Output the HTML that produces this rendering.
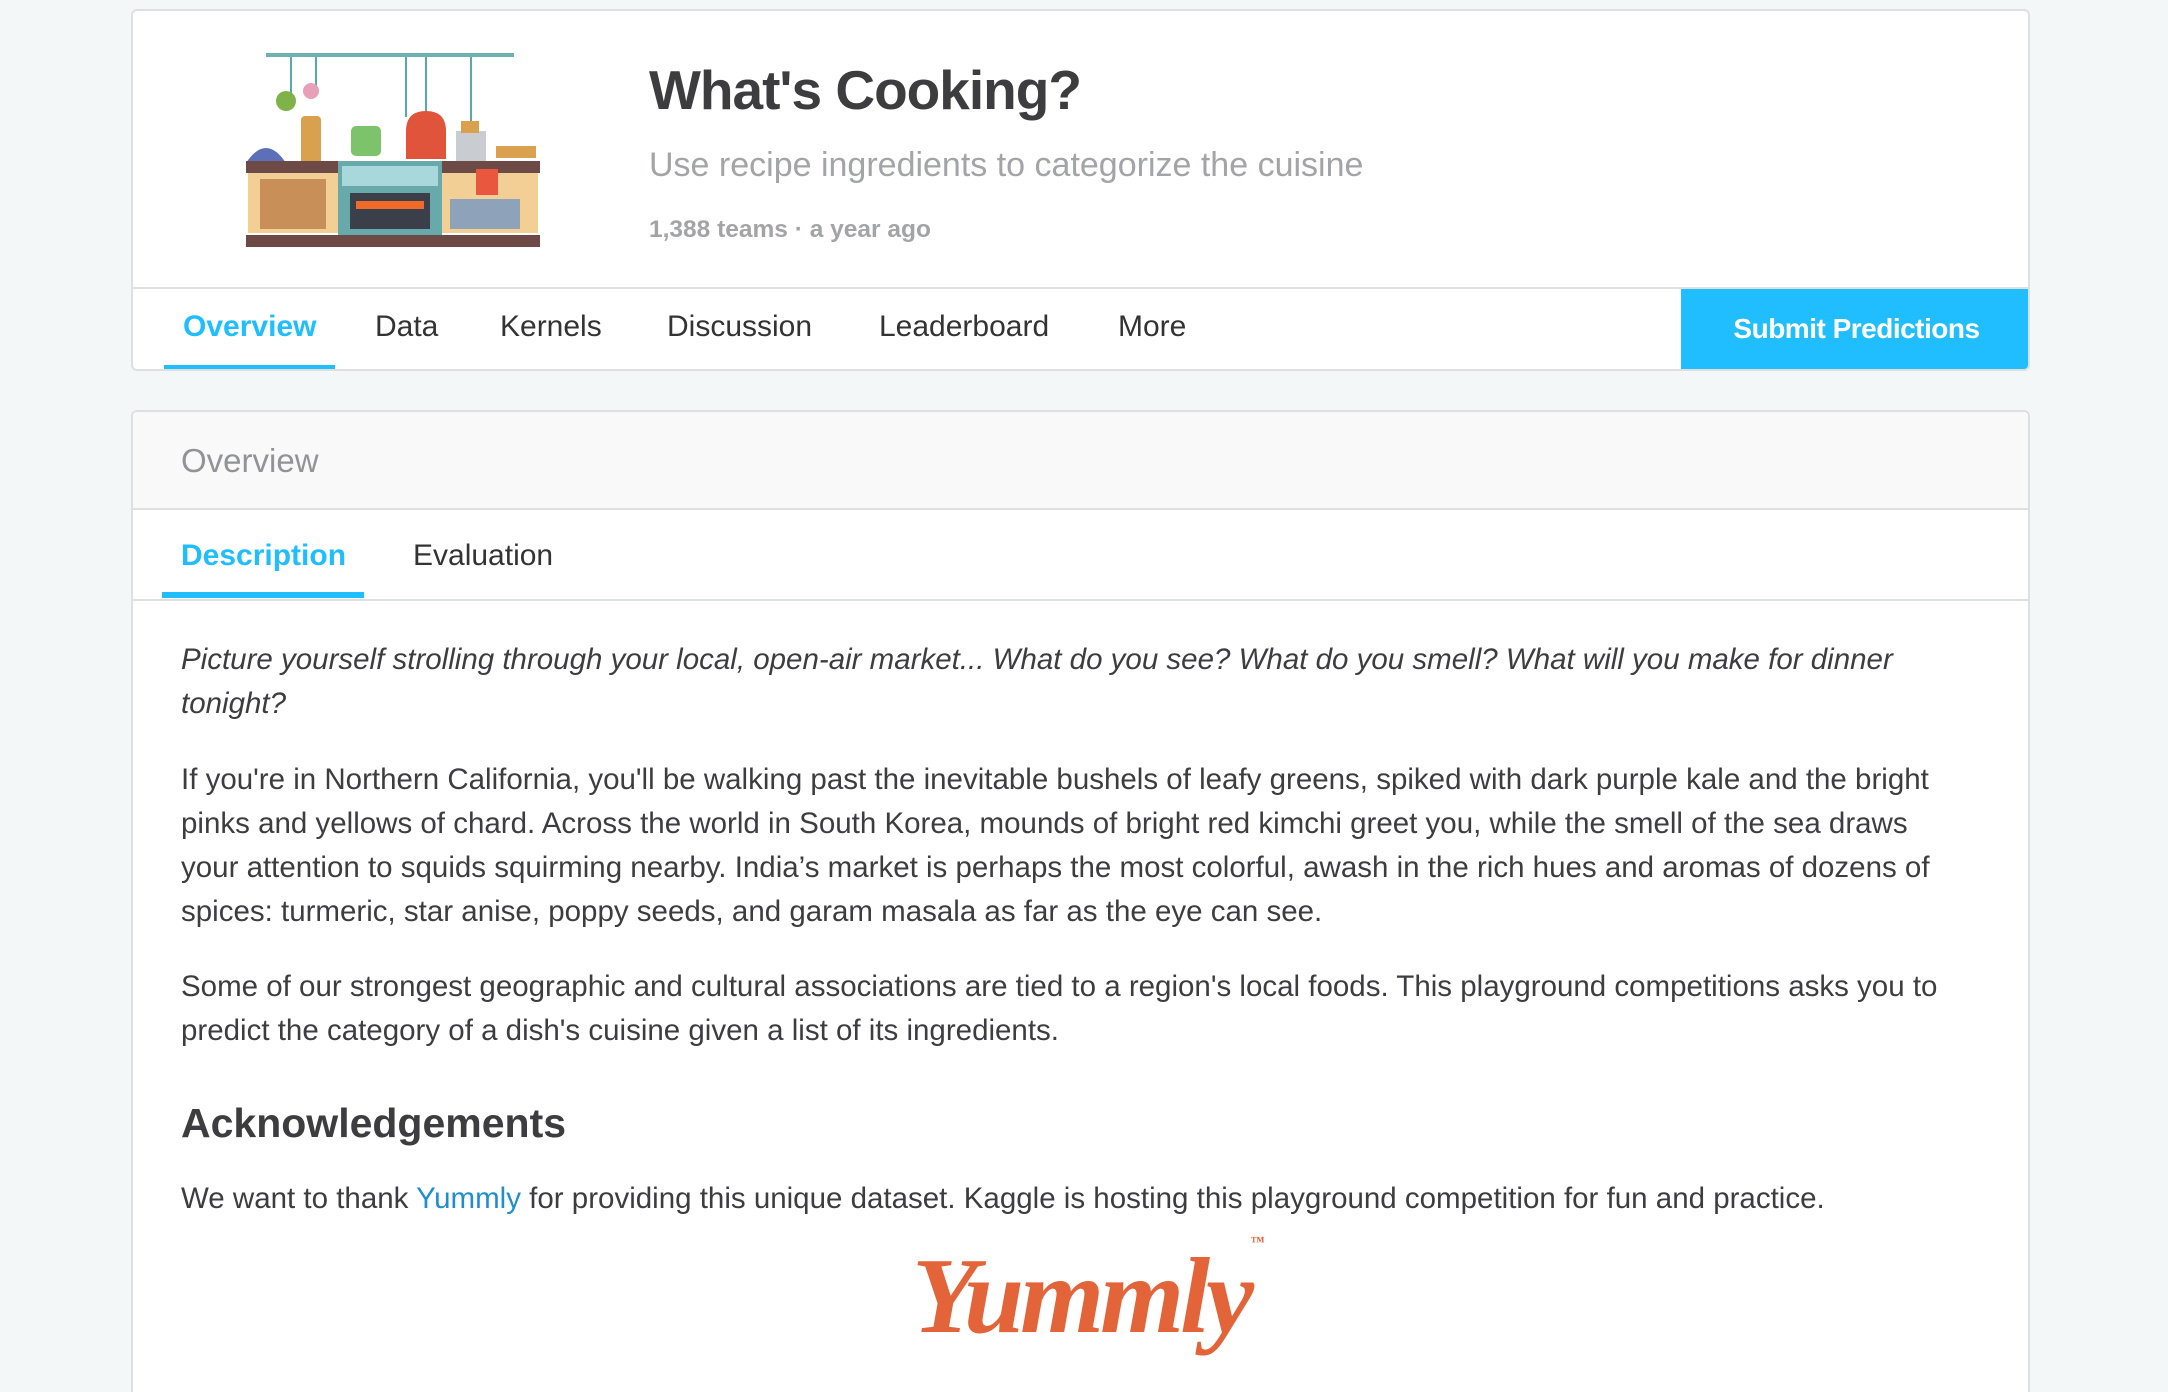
<!DOCTYPE html>
<html style="width:2168px;height:1392px;overflow:hidden"><head><meta charset="utf-8"><style>
*{margin:0;padding:0;box-sizing:border-box}
body{width:2168px;height:1392px;background:#f4f7f8;font-family:"Liberation Sans",sans-serif;color:#3d3d40;position:relative;overflow:hidden}
.card{position:absolute;background:#fff;border:2px solid #dedfe0;border-radius:6px}
.abs{position:absolute;white-space:nowrap}
.tab{position:absolute;top:310px;font-size:30px;color:#333}
p.b{position:absolute;left:181px;width:1790px;font-size:29.5px;line-height:44px;color:#3d3d40}
</style></head><body>
<div class="card" style="left:131px;top:9px;width:1899px;height:362px;overflow:hidden">
  <div style="position:absolute;left:0;right:0;top:276px;height:2px;background:#dedfe0"></div>
  <div style="position:absolute;left:1548px;top:278px;width:351px;height:84px;background:#20beff;color:#fff;font-weight:bold;font-size:28px;text-align:center;line-height:80px;letter-spacing:-0.5px">Submit Predictions</div>
  <div style="position:absolute;left:31px;top:354px;width:171px;height:6px;background:#20beff"></div>
</div>
<svg class="abs" style="left:246px;top:51px" width="294" height="196" viewBox="0 0 294 196">
  <rect x="20" y="2" width="248" height="4" fill="#6fb0b5"/>
  <path d="M45 6 v40 M70 6 v30 M160 6 v60 M180 6 v70 M225 6 v80" stroke="#5aa" stroke-width="2"/>
  <circle cx="40" cy="50" r="10" fill="#7fb34a"/><circle cx="65" cy="40" r="8" fill="#e8a0b8"/>
  <rect x="55" y="65" width="20" height="50" rx="4" fill="#d9a14e"/>
  <path d="M0 112 q20 -30 40 0z" fill="#5c6fb8"/>
  <rect x="105" y="75" width="30" height="30" rx="5" fill="#7cc36b"/>
  <path d="M160 80 q0 -20 20 -20 q20 0 20 20 v28 h-40z" fill="#e0543c"/>
  <rect x="210" y="80" width="30" height="30" fill="#c9ccd0"/><rect x="215" y="70" width="18" height="12" fill="#d9a14e"/>
  <rect x="250" y="95" width="40" height="12" fill="#d9a14e"/>
  <rect x="0" y="110" width="294" height="12" fill="#6d4a45"/>
  <rect x="2" y="122" width="90" height="60" fill="#f2cf94"/>
  <rect x="14" y="128" width="66" height="50" fill="#c98f58"/>
  <rect x="92" y="110" width="104" height="74" fill="#68a9ab"/>
  <rect x="96" y="115" width="96" height="20" fill="#a9d8dc"/>
  <rect x="104" y="142" width="80" height="36" fill="#3a3f4a"/>
  <rect x="110" y="150" width="68" height="8" fill="#f06a2a"/>
  <rect x="196" y="122" width="96" height="60" fill="#f2cf94"/>
  <rect x="204" y="148" width="70" height="30" fill="#8ea2b9"/>
  <rect x="230" y="118" width="22" height="26" fill="#e9573e"/>
  <rect x="0" y="184" width="294" height="12" fill="#6d4a45"/>
</svg>
<div class="abs" style="left:649px;top:58px;font-size:55px;font-weight:bold;color:#3d3d40;letter-spacing:-1px">What's Cooking?</div>
<div class="abs" style="left:649px;top:146px;font-size:34px;color:#a3a4a6">Use recipe ingredients to categorize the cuisine</div>
<div class="abs" style="left:649px;top:216px;font-size:24.5px;font-weight:bold;color:#a3a4a6">1,388 teams · a year ago</div>
<div class="tab" style="left:183px;color:#20beff;font-weight:bold">Overview</div>
<div class="tab" style="left:375px">Data</div>
<div class="tab" style="left:500px">Kernels</div>
<div class="tab" style="left:667px">Discussion</div>
<div class="tab" style="left:879px">Leaderboard</div>
<div class="tab" style="left:1118px">More</div>

<div class="card" style="left:131px;top:410px;width:1899px;height:990px;border-radius:6px 6px 0 0">
  <div style="position:absolute;left:0;right:0;top:0;height:98px;background:#f9f9f9;border-bottom:2px solid #dedfe0;border-radius:6px 6px 0 0"></div>
  <div style="position:absolute;left:0;right:0;top:187px;height:2px;background:#dedfe0"></div>
  <div style="position:absolute;left:29px;top:180px;width:202px;height:6px;background:#20beff"></div>
</div>
<div class="abs" style="left:181px;top:442px;font-size:33px;color:#929396">Overview</div>
<div class="abs" style="left:181px;top:539px;font-size:30px;color:#20beff;font-weight:bold">Description</div>
<div class="abs" style="left:413px;top:539px;font-size:30px;color:#333">Evaluation</div>

<p class="b" style="top:638px;font-style:italic">Picture yourself strolling through your local, open-air market... What do you see? What do you smell? What will you make for dinner tonight?</p>
<p class="b" style="top:758px">If you're in Northern California, you'll be walking past the inevitable bushels of leafy greens, spiked with dark purple kale and the bright pinks and yellows of chard. Across the world in South Korea, mounds of bright red kimchi greet you, while the smell of the sea draws your attention to squids squirming nearby. India’s market is perhaps the most colorful, awash in the rich hues and aromas of dozens of spices: turmeric, star anise, poppy seeds, and garam masala as far as the eye can see.</p>
<p class="b" style="top:965px">Some of our strongest geographic and cultural associations are tied to a region's local foods. This playground competitions asks you to predict the category of a dish's cuisine given a list of its ingredients.</p>
<div class="abs" style="left:181px;top:1100px;font-size:41px;font-weight:bold;color:#3d3d40">Acknowledgements</div>
<p class="b" style="top:1177px">We want to thank <span style="color:#1d8fd0">Yummly</span> for providing this unique dataset. Kaggle is hosting this playground competition for fun and practice.</p>
<div class="abs" style="left:912px;top:1235px;font-size:108px;font-weight:bold;font-style:italic;color:#e4643a;font-family:'Liberation Serif',serif;letter-spacing:-4px">Yummly<span style="font-size:14px;vertical-align:top">™</span></div>
</body></html>
